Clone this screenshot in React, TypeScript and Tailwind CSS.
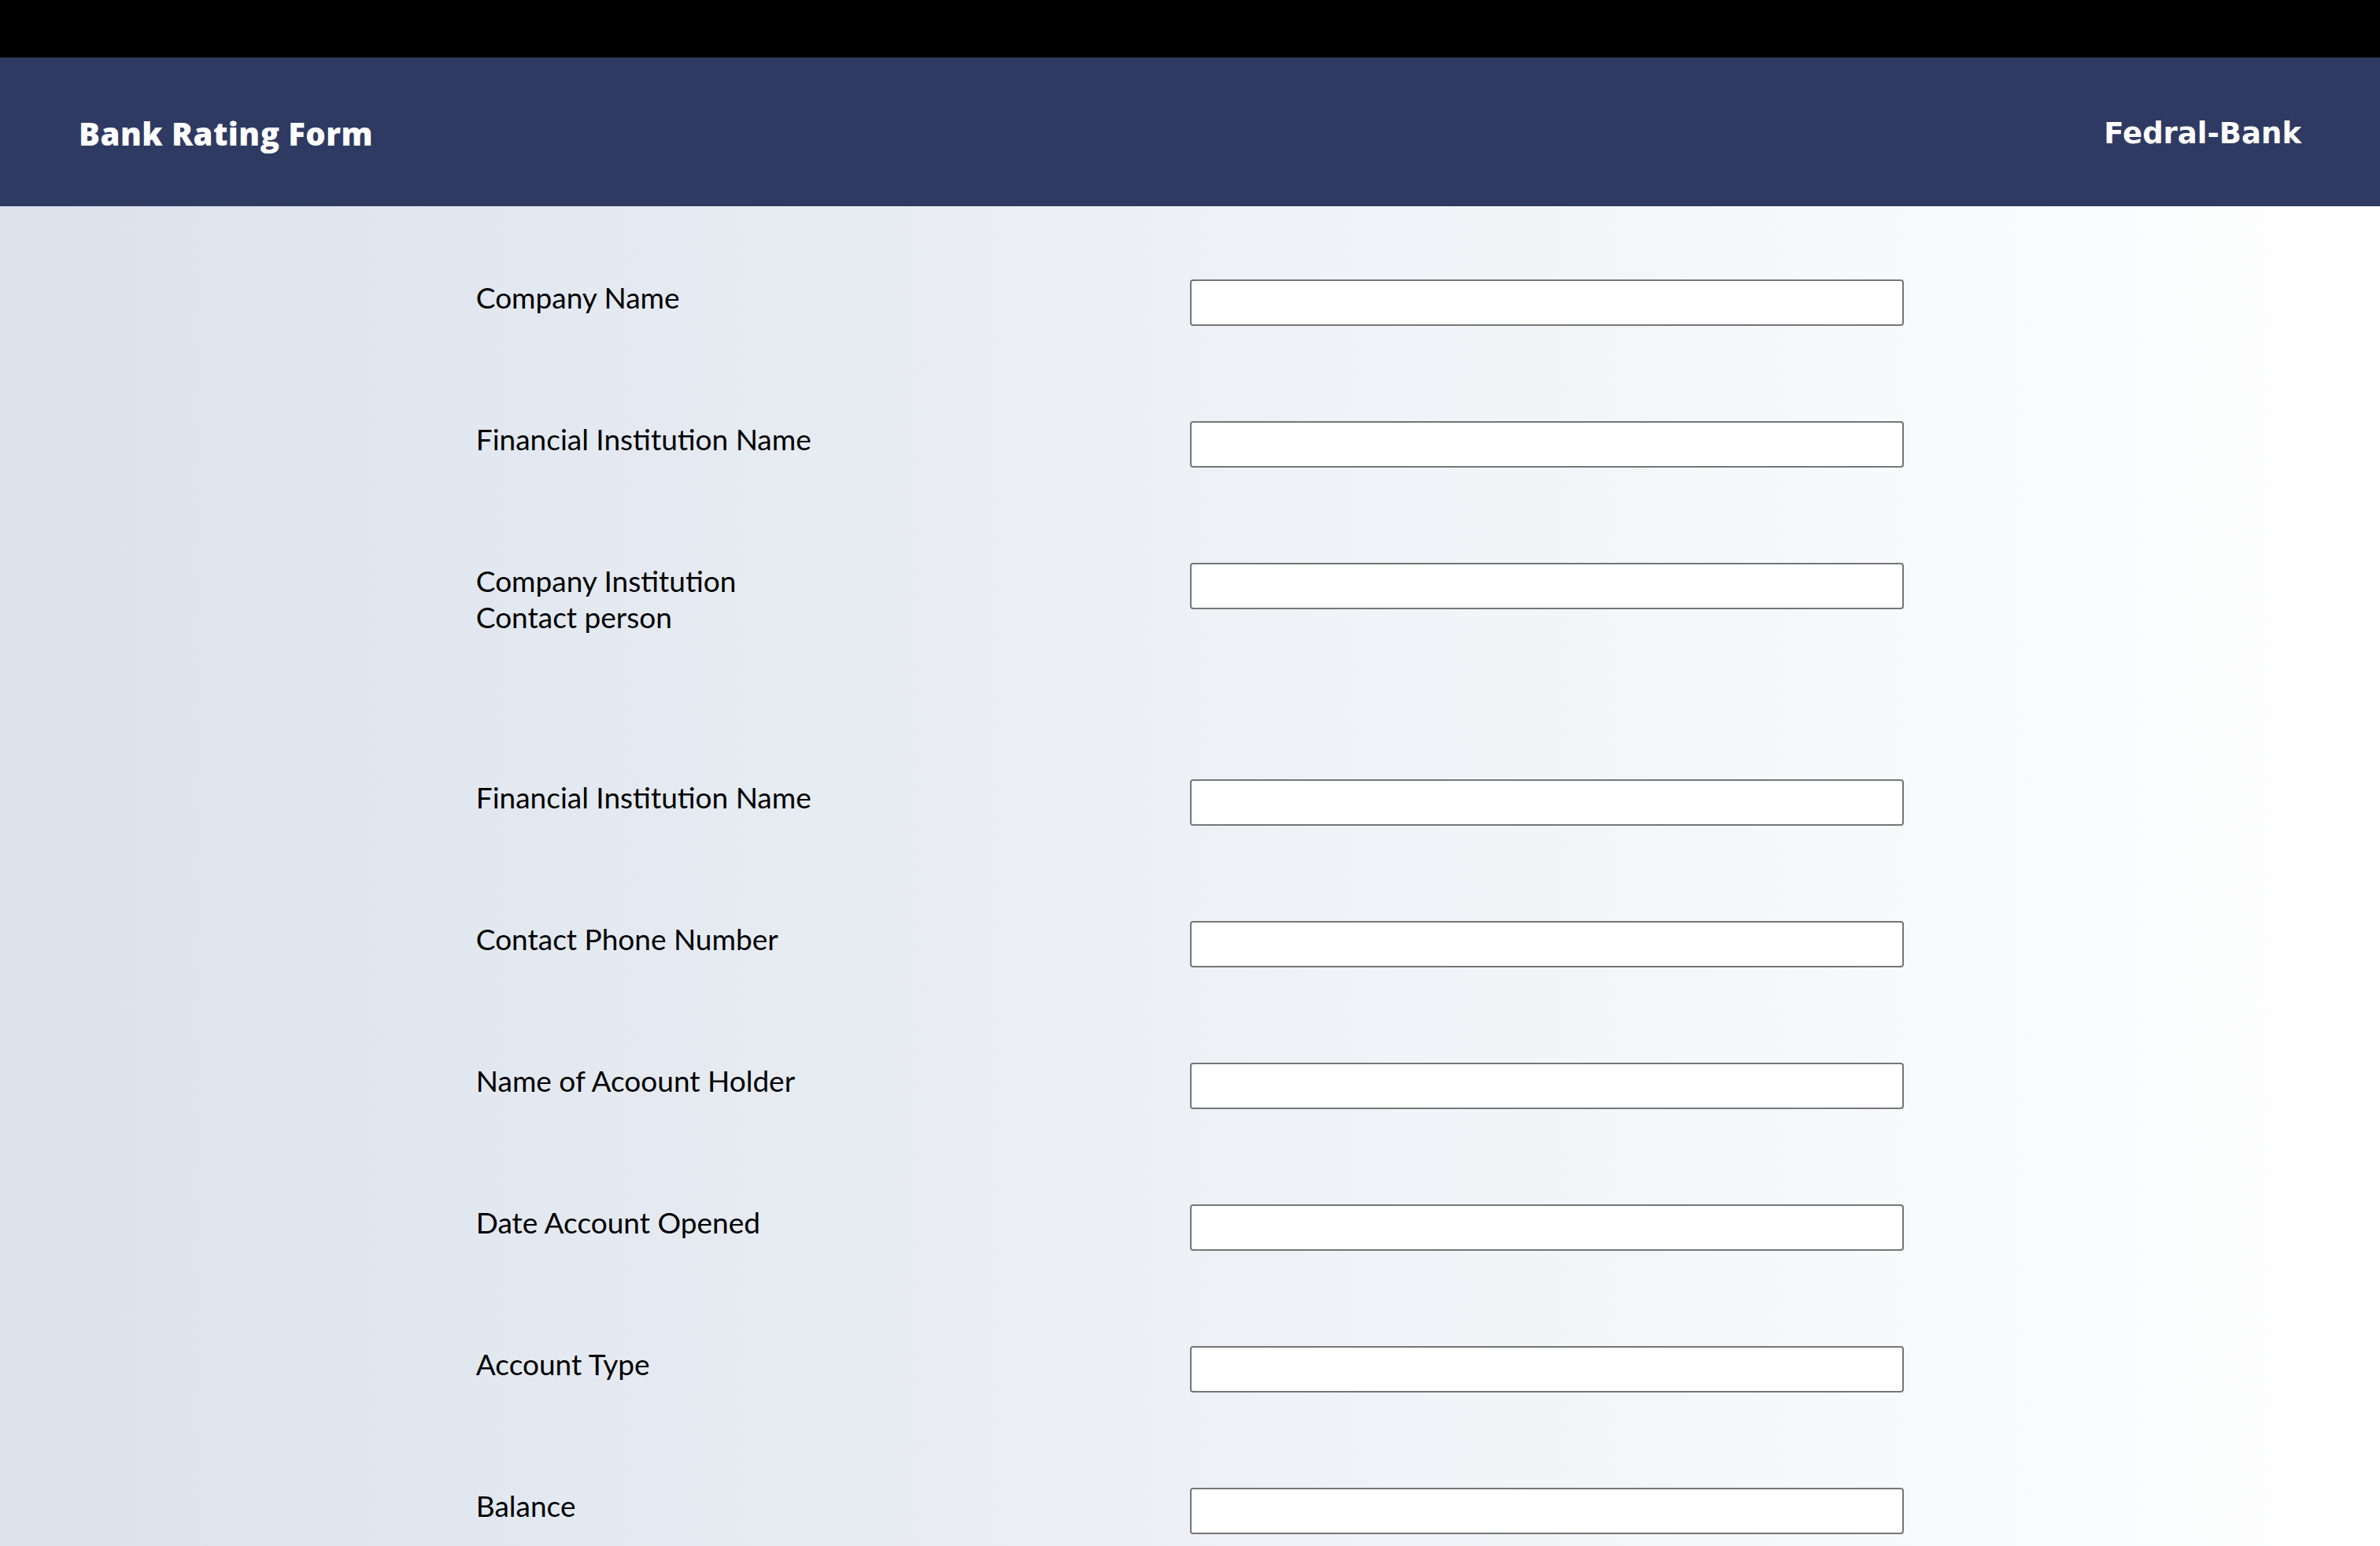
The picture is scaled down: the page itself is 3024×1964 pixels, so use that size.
import React from "react";

interface Field {
  label: string[];
  rowClass: string;
}

const fields: Field[] = [
  { label: ["Company Name"], rowClass: "h-[180px]" },
  { label: ["Financial Institution Name"], rowClass: "h-[180px]" },
  { label: ["Company Institution", "Contact person"], rowClass: "h-[275px]" },
  { label: ["Financial Institution Name"], rowClass: "h-[180px]" },
  { label: ["Contact Phone Number"], rowClass: "h-[180px]" },
  { label: ["Name of Acoount Holder"], rowClass: "h-[180px]" },
  { label: ["Date Account Opened"], rowClass: "h-[180px]" },
  { label: ["Account Type"], rowClass: "h-[180px]" },
  { label: ["Balance"], rowClass: "h-[180px]" }
];

export default function App() {
  return (
    <div className="min-h-screen w-full bg-linear-to-r from-[#dbe2ec] to-white">
      {/* Top strip */}
      <div className="h-[73px] w-full bg-black" />

      {/* Title bar */}
      <header className="h-[189px] w-full bg-[#2f3a62] flex items-center justify-between px-[100px] pt-[4px] text-white">
        <h1 className="font-['Open_Sans',sans-serif] font-extrabold text-[40px] leading-none tracking-[0.5px]">
          Bank Rating Form
        </h1>
        <span className="font-['DejaVu_Sans',sans-serif] font-bold text-[37px] leading-none tracking-[0px]">
          Fedral-Bank
        </span>
      </header>

      {/* Form */}
      <main className="w-[60%] mx-auto pt-[93px]">
        {fields.map((f, i) => (
          <div key={i} className={`flex items-start ${f.rowClass}`}>
            <label className="w-1/2 font-['Lato',sans-serif] text-[37px] leading-[46px] text-black">
              {f.label.map((line, j) => (
                <div key={j}>{line}</div>
              ))}
            </label>
            <div className="w-1/2">
              <input
                type="text"
                className="w-full h-[59px] bg-white border-2 border-[#767676] rounded-[4px] outline-none"
              />
            </div>
          </div>
        ))}
      </main>
    </div>
  );
}
